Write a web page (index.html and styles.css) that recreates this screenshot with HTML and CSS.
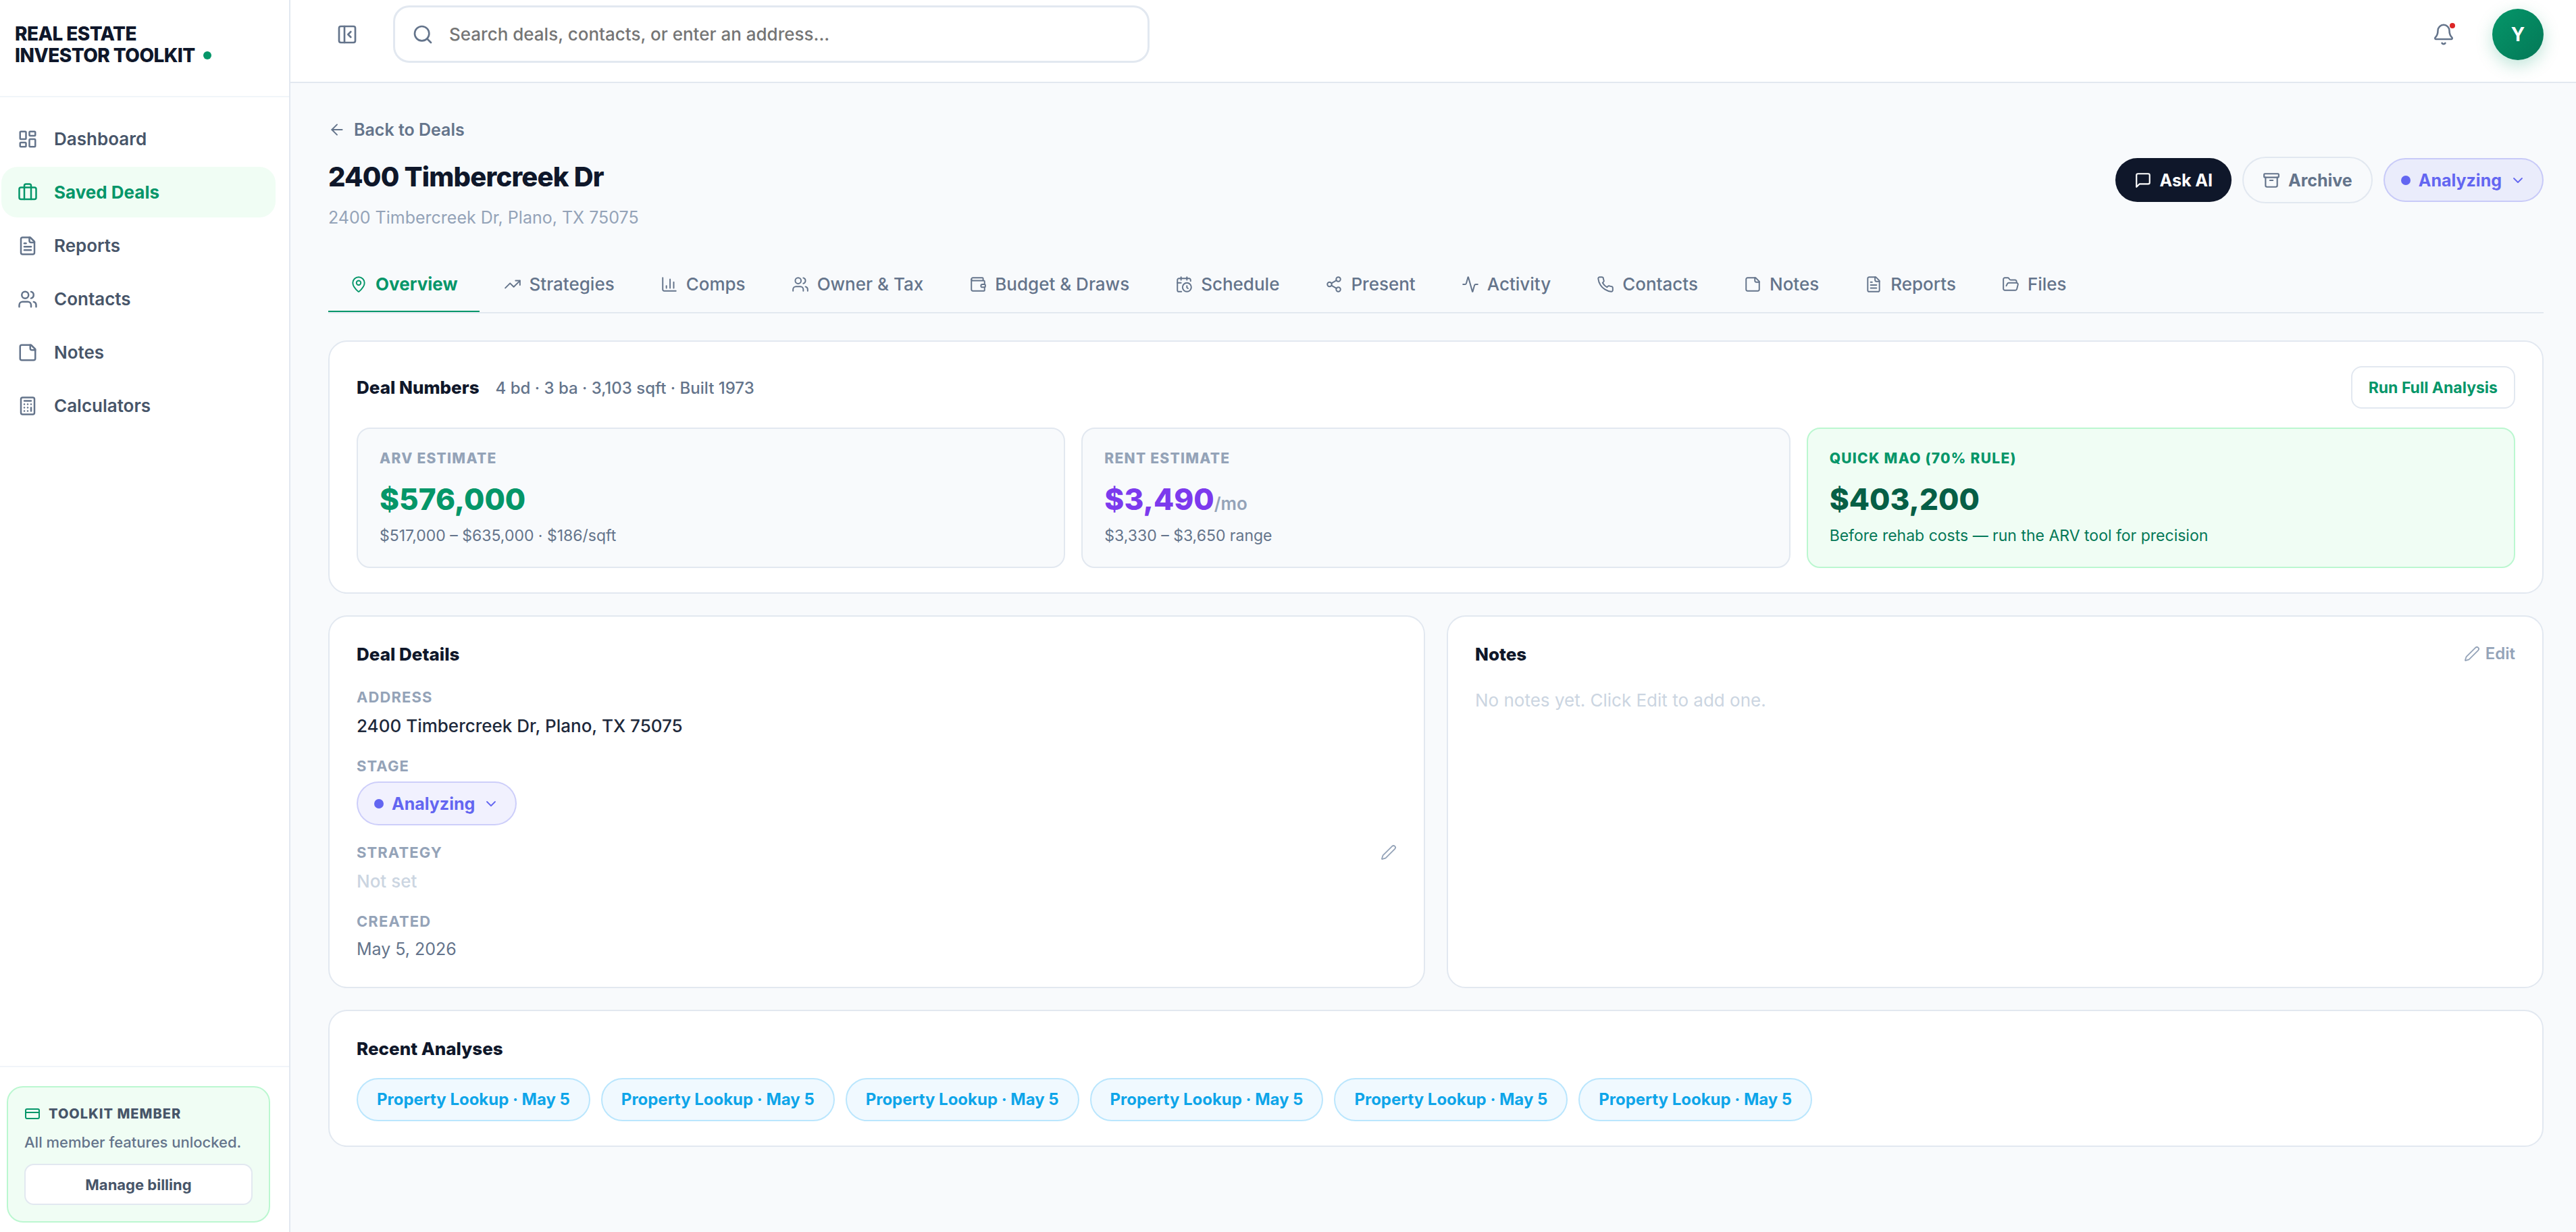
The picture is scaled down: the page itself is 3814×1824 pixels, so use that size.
FILE: index.html
```html
<!DOCTYPE html>
<html lang="en">

<head>
    <meta charset="UTF-8">
    <meta name="viewport" content="width=device-width, initial-scale=1.0">
    <title>2400 Timbercreek Dr - Real Estate Investor Toolkit</title>
    <link rel="stylesheet" href="styles.css">
</head>

<body>
    <!-- Icon sprite -->
    <svg class="sprite" xmlns="http://www.w3.org/2000/svg">
        <symbol id="i-dashboard" viewBox="0 0 24 24"><rect x="3" y="3" width="7" height="9" rx="1"/><rect x="14" y="3" width="7" height="5" rx="1"/><rect x="14" y="12" width="7" height="9" rx="1"/><rect x="3" y="16" width="7" height="5" rx="1"/></symbol>
        <symbol id="i-briefcase" viewBox="0 0 24 24"><path d="M16 20V4a2 2 0 0 0-2-2h-4a2 2 0 0 0-2 2v16"/><rect x="2" y="6" width="20" height="14" rx="2"/></symbol>
        <symbol id="i-report" viewBox="0 0 24 24"><path d="M15 2H6a2 2 0 0 0-2 2v16a2 2 0 0 0 2 2h12a2 2 0 0 0 2-2V7Z"/><path d="M14 2v4a2 2 0 0 0 2 2h4"/><path d="M10 9H8"/><path d="M16 13H8"/><path d="M16 17H8"/></symbol>
        <symbol id="i-users" viewBox="0 0 24 24"><path d="M16 21v-2a4 4 0 0 0-4-4H6a4 4 0 0 0-4 4v2"/><circle cx="9" cy="7" r="4"/><path d="M22 21v-2a4 4 0 0 0-3-3.87"/><path d="M16 3.13a4 4 0 0 1 0 7.75"/></symbol>
        <symbol id="i-note" viewBox="0 0 24 24"><path d="M16 3H5a2 2 0 0 0-2 2v14a2 2 0 0 0 2 2h14a2 2 0 0 0 2-2V8Z"/><path d="M15 3v4a2 2 0 0 0 2 2h4"/></symbol>
        <symbol id="i-calculator" viewBox="0 0 24 24"><rect x="4" y="2" width="16" height="20" rx="2"/><path d="M8 6h8"/><path d="M16 14v4"/><path d="M16 10h.01"/><path d="M12 10h.01"/><path d="M8 10h.01"/><path d="M12 14h.01"/><path d="M8 14h.01"/><path d="M12 18h.01"/><path d="M8 18h.01"/></symbol>
        <symbol id="i-card" viewBox="0 0 24 24"><rect x="2" y="5" width="20" height="14" rx="2"/><path d="M2 10h20"/></symbol>
        <symbol id="i-panel" viewBox="0 0 24 24"><rect x="3" y="3" width="18" height="18" rx="2"/><path d="M9 3v18"/><path d="m16 15-3-3 3-3"/></symbol>
        <symbol id="i-search" viewBox="0 0 24 24"><circle cx="11" cy="11" r="8"/><path d="m21 21-4.3-4.3"/></symbol>
        <symbol id="i-bell" viewBox="0 0 24 24"><path d="M10.268 21a2 2 0 0 0 3.464 0"/><path d="M3.262 15.326A1 1 0 0 0 4 17h16a1 1 0 0 0 .74-1.673C19.41 13.956 18 12.499 18 8A6 6 0 0 0 6 8c0 4.499-1.411 5.956-2.738 7.326"/></symbol>
        <symbol id="i-back" viewBox="0 0 24 24"><path d="m12 19-7-7 7-7"/><path d="M19 12H5"/></symbol>
        <symbol id="i-message" viewBox="0 0 24 24"><path d="M21 15a2 2 0 0 1-2 2H7l-4 4V5a2 2 0 0 1 2-2h14a2 2 0 0 1 2 2z"/></symbol>
        <symbol id="i-archive" viewBox="0 0 24 24"><rect x="2" y="3" width="20" height="5" rx="1"/><path d="M4 8v11a2 2 0 0 0 2 2h12a2 2 0 0 0 2-2V8"/><path d="M10 12h4"/></symbol>
        <symbol id="i-chevron" viewBox="0 0 24 24"><path d="m6 9 6 6 6-6"/></symbol>
        <symbol id="i-pin" viewBox="0 0 24 24"><path d="M20 10c0 4.993-5.539 10.193-7.399 11.799a1 1 0 0 1-1.202 0C9.539 20.193 4 14.993 4 10a8 8 0 0 1 16 0"/><circle cx="12" cy="10" r="3"/></symbol>
        <symbol id="i-trend" viewBox="0 0 24 24"><path d="m22 7-8.5 8.5-5-5L2 17"/><path d="M16 7h6v6"/></symbol>
        <symbol id="i-chart" viewBox="0 0 24 24"><path d="M3 3v16a2 2 0 0 0 2 2h16"/><path d="M18 17V9"/><path d="M13 17V5"/><path d="M8 17v-3"/></symbol>
        <symbol id="i-wallet" viewBox="0 0 24 24"><path d="M19 7V4a1 1 0 0 0-1-1H5a2 2 0 0 0 0 4h15a1 1 0 0 1 1 1v4h-3a2 2 0 0 0 0 4h3a1 1 0 0 0 1-1v-2a1 1 0 0 0-1-1"/><path d="M3 5v14a2 2 0 0 0 2 2h15a1 1 0 0 0 1-1v-4"/></symbol>
        <symbol id="i-calendar" viewBox="0 0 24 24"><path d="M21 7.5V6a2 2 0 0 0-2-2H5a2 2 0 0 0-2 2v14a2 2 0 0 0 2 2h3.5"/><path d="M16 2v4"/><path d="M8 2v4"/><path d="M3 10h5"/><path d="M17.5 17.5 16 16.3V14"/><circle cx="16" cy="16" r="6"/></symbol>
        <symbol id="i-share" viewBox="0 0 24 24"><circle cx="18" cy="5" r="3"/><circle cx="6" cy="12" r="3"/><circle cx="18" cy="19" r="3"/><path d="m8.59 13.51 6.83 3.98"/><path d="m15.41 6.51-6.82 3.98"/></symbol>
        <symbol id="i-activity" viewBox="0 0 24 24"><path d="M22 12h-2.48a2 2 0 0 0-1.93 1.46l-2.35 8.36a.25.25 0 0 1-.48 0L9.24 2.18a.25.25 0 0 0-.48 0l-2.35 8.36A2 2 0 0 1 4.49 12H2"/></symbol>
        <symbol id="i-phone" viewBox="0 0 24 24"><path d="M22 16.92v3a2 2 0 0 1-2.18 2 19.79 19.79 0 0 1-8.63-3.07 19.5 19.5 0 0 1-6-6 19.79 19.79 0 0 1-3.07-8.67A2 2 0 0 1 4.11 2h3a2 2 0 0 1 2 1.72 12.84 12.84 0 0 0 .7 2.81 2 2 0 0 1-.45 2.11L8.09 9.91a16 16 0 0 0 6 6l1.27-1.27a2 2 0 0 1 2.11-.45 12.84 12.84 0 0 0 2.81.7A2 2 0 0 1 22 16.92z"/></symbol>
        <symbol id="i-folder" viewBox="0 0 24 24"><path d="m6 14 1.5-2.9A2 2 0 0 1 9.24 10H20a2 2 0 0 1 1.94 2.5l-1.54 6a2 2 0 0 1-1.95 1.5H4a2 2 0 0 1-2-2V5a2 2 0 0 1 2-2h3.9a2 2 0 0 1 1.69.9l.81 1.2a2 2 0 0 0 1.67.9H18a2 2 0 0 1 2 2v2"/></symbol>
        <symbol id="i-pen" viewBox="0 0 24 24"><path d="M21.174 6.812a1 1 0 0 0-3.986-3.987L3.842 16.174a2 2 0 0 0-.5.83l-1.321 4.352a.5.5 0 0 0 .623.622l4.353-1.32a2 2 0 0 0 .83-.497z"/></symbol>
    </svg>

    <div class="app">
        <aside class="sidebar">
            <div class="brand">REAL ESTATE<br>INVESTOR TOOLKIT<span class="brand-dot"></span></div>

            <nav class="nav">
                <a class="nav-item"><svg class="icon"><use href="#i-dashboard"/></svg>Dashboard</a>
                <a class="nav-item active"><svg class="icon"><use href="#i-briefcase"/></svg>Saved Deals</a>
                <a class="nav-item"><svg class="icon"><use href="#i-report"/></svg>Reports</a>
                <a class="nav-item"><svg class="icon"><use href="#i-users"/></svg>Contacts</a>
                <a class="nav-item"><svg class="icon"><use href="#i-note"/></svg>Notes</a>
                <a class="nav-item"><svg class="icon"><use href="#i-calculator"/></svg>Calculators</a>
            </nav>

            <div class="sidebar-footer">
                <div class="member">
                    <div class="member-title"><svg class="icon"><use href="#i-card"/></svg>TOOLKIT MEMBER</div>
                    <p class="member-text">All member features unlocked.</p>
                    <button class="member-btn">Manage billing</button>
                </div>
            </div>
        </aside>

        <div class="main">
            <header class="topbar">
                <svg class="icon panel-toggle"><use href="#i-panel"/></svg>
                <label class="search">
                    <svg class="icon"><use href="#i-search"/></svg>
                    <input type="text" placeholder="Search deals, contacts, or enter an address...">
                </label>
                <div class="topbar-right">
                    <div class="bell">
                        <svg class="icon"><use href="#i-bell"/></svg>
                        <span class="bell-dot"></span>
                    </div>
                    <div class="avatar">Y</div>
                </div>
            </header>

            <main class="content">
                <a class="back"><svg class="icon"><use href="#i-back"/></svg>Back to Deals</a>

                <div class="deal-header">
                    <div>
                        <h1>2400 Timbercreek Dr</h1>
                        <p class="subtitle">2400 Timbercreek Dr, Plano, TX 75075</p>
                    </div>
                    <div class="actions">
                        <button class="btn btn-dark"><svg class="icon"><use href="#i-message"/></svg>Ask AI</button>
                        <button class="btn btn-outline"><svg class="icon"><use href="#i-archive"/></svg>Archive</button>
                        <button class="stage"><span class="stage-dot"></span>Analyzing<svg class="icon"><use href="#i-chevron"/></svg></button>
                    </div>
                </div>

                <nav class="tabs">
                    <a class="tab active"><svg class="icon"><use href="#i-pin"/></svg>Overview</a>
                    <a class="tab"><svg class="icon"><use href="#i-trend"/></svg>Strategies</a>
                    <a class="tab"><svg class="icon"><use href="#i-chart"/></svg>Comps</a>
                    <a class="tab"><svg class="icon"><use href="#i-users"/></svg>Owner &amp; Tax</a>
                    <a class="tab"><svg class="icon"><use href="#i-wallet"/></svg>Budget &amp; Draws</a>
                    <a class="tab"><svg class="icon"><use href="#i-calendar"/></svg>Schedule</a>
                    <a class="tab"><svg class="icon"><use href="#i-share"/></svg>Present</a>
                    <a class="tab"><svg class="icon"><use href="#i-activity"/></svg>Activity</a>
                    <a class="tab"><svg class="icon"><use href="#i-phone"/></svg>Contacts</a>
                    <a class="tab"><svg class="icon"><use href="#i-note"/></svg>Notes</a>
                    <a class="tab"><svg class="icon"><use href="#i-report"/></svg>Reports</a>
                    <a class="tab"><svg class="icon"><use href="#i-folder"/></svg>Files</a>
                </nav>

                <section class="card numbers">
                    <div class="numbers-head">
                        <div class="numbers-title">
                            <h2>Deal Numbers</h2>
                            <span class="specs">4 bd · 3 ba · 3,103 sqft · Built 1973</span>
                        </div>
                        <button class="btn-run">Run Full Analysis</button>
                    </div>
                    <div class="metrics">
                        <div class="metric">
                            <div class="metric-label">ARV ESTIMATE</div>
                            <div class="metric-value green">$576,000</div>
                            <div class="metric-note">$517,000 – $635,000 · $186/sqft</div>
                        </div>
                        <div class="metric">
                            <div class="metric-label">RENT ESTIMATE</div>
                            <div class="metric-value purple">$3,490<span class="per">/mo</span></div>
                            <div class="metric-note">$3,330 – $3,650 range</div>
                        </div>
                        <div class="metric highlight">
                            <div class="metric-label">QUICK MAO (70% RULE)</div>
                            <div class="metric-value">$403,200</div>
                            <div class="metric-note">Before rehab costs — run the ARV tool for precision</div>
                        </div>
                    </div>
                </section>

                <div class="columns">
                    <section class="card details">
                        <h2>Deal Details</h2>
                        <div class="field">
                            <div class="field-label">ADDRESS</div>
                            <div class="field-value">2400 Timbercreek Dr, Plano, TX 75075</div>
                        </div>
                        <div class="field field-stage">
                            <div class="field-label">STAGE</div>
                            <button class="stage"><span class="stage-dot"></span>Analyzing<svg class="icon"><use href="#i-chevron"/></svg></button>
                        </div>
                        <div class="field">
                            <div class="field-label">STRATEGY<svg class="icon"><use href="#i-pen"/></svg></div>
                            <div class="field-value empty">Not set</div>
                        </div>
                        <div class="field">
                            <div class="field-label">CREATED</div>
                            <div class="field-value date">May 5, 2026</div>
                        </div>
                    </section>

                    <section class="card notes">
                        <div class="notes-head">
                            <h2>Notes</h2>
                            <a class="edit"><svg class="icon"><use href="#i-pen"/></svg>Edit</a>
                        </div>
                        <p class="notes-empty">No notes yet. Click Edit to add one.</p>
                    </section>
                </div>

                <section class="card recent">
                    <h2>Recent Analyses</h2>
                    <div class="chips">
                        <a class="chip">Property Lookup · May 5</a>
                        <a class="chip">Property Lookup · May 5</a>
                        <a class="chip">Property Lookup · May 5</a>
                        <a class="chip">Property Lookup · May 5</a>
                        <a class="chip">Property Lookup · May 5</a>
                        <a class="chip">Property Lookup · May 5</a>
                    </div>
                </section>
            </main>
        </div>
    </div>
</body>

</html>
```
FILE: styles.css
```css
* {
    box-sizing: border-box;
    margin: 0;
    padding: 0;
}

body {
    font-family: Inter, sans-serif;
    font-size: 26px;
    color: #0f172a;
    background: #f8fafc;
}

button,
input {
    font-family: inherit;
}

button {
    cursor: pointer;
}

.sprite {
    display: none;
}

.icon {
    display: block;
    flex-shrink: 0;
    width: 26px;
    height: 26px;
    fill: none;
    stroke: currentColor;
    stroke-width: 1.8;
    stroke-linecap: round;
    stroke-linejoin: round;
}

.app {
    display: flex;
    height: 100vh;
}

/* Sidebar */
.sidebar {
    display: flex;
    flex-direction: column;
    flex-shrink: 0;
    width: 430px;
    background: #fff;
    border-right: 2px solid #e2e8f0;
}

.brand {
    height: 144px;
    padding: 34px 22px 0;
    border-bottom: 2px solid #f1f5f9;
    font-size: 28px;
    font-weight: 800;
    line-height: 32px;
    letter-spacing: -0.02em;
}

.brand-dot {
    display: inline-block;
    width: 12px;
    height: 12px;
    margin-left: 12px;
    border-radius: 50%;
    background: #059669;
    vertical-align: 4px;
}

.nav {
    display: flex;
    flex: 1;
    flex-direction: column;
    gap: 4px;
    padding: 24px 20px 0 2px;
}

.nav-item {
    display: flex;
    align-items: center;
    gap: 24px;
    height: 75px;
    padding: 0 24px;
    border-radius: 24px;
    color: #475569;
    font-weight: 600;
}

.nav-item .icon {
    width: 30px;
    height: 30px;
    color: #64748b;
    stroke-width: 2;
}

.nav-item.active {
    background: #f0fdf4;
    color: #059669;
    font-weight: 700;
}

.nav-item.active .icon {
    color: #059669;
}

.sidebar-footer {
    padding: 28px 28px 14px 10px;
    border-top: 2px solid #f1f5f9;
}

.member {
    padding: 24px;
    border: 2px solid #bbf7d0;
    border-radius: 24px;
    background: #f0fdf4;
}

.member-title {
    display: flex;
    align-items: center;
    gap: 12px;
    color: #475569;
    font-size: 20px;
    font-weight: 800;
    line-height: 30px;
    letter-spacing: 0.05em;
}

.member-title .icon {
    width: 24px;
    height: 24px;
    color: #059669;
    stroke-width: 2;
}

.member-text {
    margin: 10px 0 15px;
    color: #64748b;
    font-size: 22px;
    font-weight: 500;
    line-height: 34px;
}

.member-btn {
    display: block;
    width: 100%;
    height: 61px;
    border: 2px solid #e2e8f0;
    border-radius: 14px;
    background: #fff;
    color: #475569;
    font-size: 22px;
    font-weight: 700;
}

/* Top bar */
.main {
    display: flex;
    flex: 1;
    flex-direction: column;
    min-width: 0;
}

.topbar {
    display: flex;
    align-items: center;
    height: 123px;
    padding: 0 48px 20px 68px;
    border-bottom: 2px solid #e2e8f0;
    background: #fff;
    color: #64748b;
}

.topbar .icon {
    width: 32px;
    height: 32px;
    stroke-width: 2;
}

.topbar .panel-toggle {
    margin: 1px 52px 0 0;
}

.search {
    display: flex;
    align-items: center;
    gap: 23px;
    width: 1120px;
    height: 85px;
    padding: 0 25px;
    border: 3px solid #e2e8f0;
    border-radius: 24px;
}

.search input {
    flex: 1;
    border: none;
    outline: none;
    background: none;
    font-size: 26px;
    font-weight: 500;
}

.topbar-right {
    display: flex;
    align-items: center;
    gap: 55px;
    margin: 1px 0 0 auto;
}

.bell {
    position: relative;
}

.bell .icon {
    width: 34px;
    height: 34px;
    stroke-width: 1.8;
}

.bell-dot {
    position: absolute;
    top: 0;
    right: 0;
    width: 8px;
    height: 8px;
    border-radius: 50%;
    background: #dc2626;
}

.avatar {
    display: flex;
    align-items: center;
    justify-content: center;
    width: 76px;
    height: 76px;
    border-radius: 50%;
    background: linear-gradient(135deg, #059669, #047857);
    box-shadow: 0 8px 24px rgba(5, 150, 105, 0.25);
    color: #fff;
    font-size: 28px;
    font-weight: 700;
}

/* Deal header */
.content {
    flex: 1;
    padding: 54px 48px 0 56px;
}

.back {
    display: flex;
    align-items: center;
    gap: 12px;
    margin-bottom: 25px;
    color: #64748b;
    font-size: 25px;
    font-weight: 600;
    line-height: 30px;
}

.deal-header {
    display: flex;
    align-items: flex-start;
    justify-content: space-between;
}

h1 {
    margin-top: 5px;
    font-size: 40px;
    font-weight: 800;
    line-height: 49px;
    letter-spacing: -0.02em;
}

h2 {
    font-size: 26px;
    font-weight: 800;
    line-height: 31px;
}

.subtitle {
    margin-top: 17px;
    color: #94a3b8;
    font-size: 25px;
    line-height: 38px;
}

.actions {
    display: flex;
    align-items: center;
    gap: 16px;
}

.btn,
.stage {
    display: flex;
    align-items: center;
    gap: 12px;
    height: 65px;
    border-radius: 35px;
    font-size: 25px;
    font-weight: 700;
}

.btn {
    padding: 0 28px;
}

.btn .icon {
    stroke-width: 2;
}

.btn-dark {
    border: none;
    background: #0f172a;
    color: #fff;
}

.btn-outline {
    height: 69px;
    border: 2px solid #e2e8f0;
    background: transparent;
    color: #64748b;
}

.stage {
    padding: 0 24px;
    border: 2px solid rgba(99, 102, 241, 0.25);
    background: rgba(99, 102, 241, 0.09);
    color: #6366f1;
}

.stage-dot {
    width: 14px;
    height: 14px;
    border-radius: 50%;
    background: #6366f1;
}

.stage .icon {
    width: 24px;
    height: 24px;
}

/* Tabs */
.tabs {
    display: flex;
    gap: 4px;
    margin: 40px 0;
    border-bottom: 2px solid #e2e8f0;
}

.tab {
    display: flex;
    align-items: center;
    gap: 12px;
    padding: 24px 32px;
    border-bottom: 2px solid transparent;
    color: #64748b;
    font-weight: 500;
    line-height: 31px;
}

.tab.active {
    border-bottom-color: #059669;
    color: #059669;
    font-weight: 700;
}

/* Cards */
.card {
    padding: 40px 40px 36px;
    border: 2px solid #e2e8f0;
    border-radius: 28px;
    background: #fff;
}

.numbers {
    padding-top: 36px;
}

.numbers-head {
    display: flex;
    align-items: center;
    justify-content: space-between;
    margin-bottom: 28px;
}

.numbers-title {
    display: flex;
    align-items: baseline;
    gap: 24px;
}

.specs {
    color: #64748b;
    font-size: 24px;
    font-weight: 500;
}

.btn-run {
    height: 63px;
    padding: 0 24px;
    border: 2px solid #e2e8f0;
    border-radius: 16px;
    background: #fff;
    color: #059669;
    font-size: 23px;
    font-weight: 700;
}

.metrics {
    display: grid;
    grid-template-columns: repeat(3, 1fr);
    gap: 24px;
}

.metric {
    padding: 31px 32px 32px;
    border: 2px solid #e2e8f0;
    border-radius: 20px;
    background: #f8fafc;
}

.metric-label {
    color: #94a3b8;
    font-size: 21px;
    font-weight: 800;
    line-height: 26px;
    letter-spacing: 0.06em;
}

.metric-value {
    margin: 20px 0 13px;
    font-size: 44px;
    font-weight: 800;
    line-height: 54px;
}

.metric-value.green {
    color: #059669;
}

.metric-value.purple {
    color: #7c3aed;
}

.per {
    color: #94a3b8;
    font-size: 26px;
    font-weight: 600;
    line-height: 0;
}

.metric-note {
    color: #64748b;
    font-size: 23px;
    line-height: 28px;
}

.metric.highlight {
    border-color: #bbf7d0;
    background: #f0fdf4;
}

.highlight .metric-label {
    color: #059669;
}

.highlight .metric-value {
    color: #065f46;
}

.highlight .metric-note {
    color: #047857;
}

.columns {
    display: grid;
    grid-template-columns: 1fr 1fr;
    gap: 32px;
    margin: 32px 0;
}

.details {
    padding-bottom: 40px;
}

.details h2 {
    margin-bottom: 34px;
}

.field {
    margin-bottom: 30px;
}

.field:last-child {
    margin-bottom: 0;
}

.field-stage {
    margin-bottom: 26px;
}

.field-label {
    display: flex;
    align-items: center;
    justify-content: space-between;
    color: #94a3b8;
    font-size: 22px;
    font-weight: 700;
    line-height: 28px;
    letter-spacing: 0.05em;
}

.field-label .icon {
    width: 24px;
    height: 24px;
}

.field .stage {
    margin-top: 9px;
}

.field-value {
    margin-top: 13px;
    color: #1e293b;
    font-weight: 500;
    line-height: 31px;
}

.field-value.empty {
    color: #cbd5e1;
}

.field-value.date {
    margin-top: 12px;
    color: #64748b;
    font-size: 25px;
    font-weight: 400;
}

.notes-head {
    display: flex;
    align-items: flex-start;
    justify-content: space-between;
}

.edit {
    display: flex;
    align-items: center;
    gap: 8px;
    color: #94a3b8;
    font-size: 24px;
    font-weight: 600;
    line-height: 29px;
}

.edit .icon {
    width: 24px;
    height: 24px;
}

.notes-empty {
    margin-top: 37px;
    color: #cbd5e1;
    line-height: 31px;
}

.chips {
    display: flex;
    gap: 16px;
    margin-top: 28px;
}

.chip {
    height: 64px;
    padding: 0 28px;
    border: 2px solid #bae6fd;
    border-radius: 32px;
    background: #f0f9ff;
    color: #0ea5e9;
    font-size: 24px;
    font-weight: 700;
    line-height: 60px;
    letter-spacing: -0.02px;
}
```
